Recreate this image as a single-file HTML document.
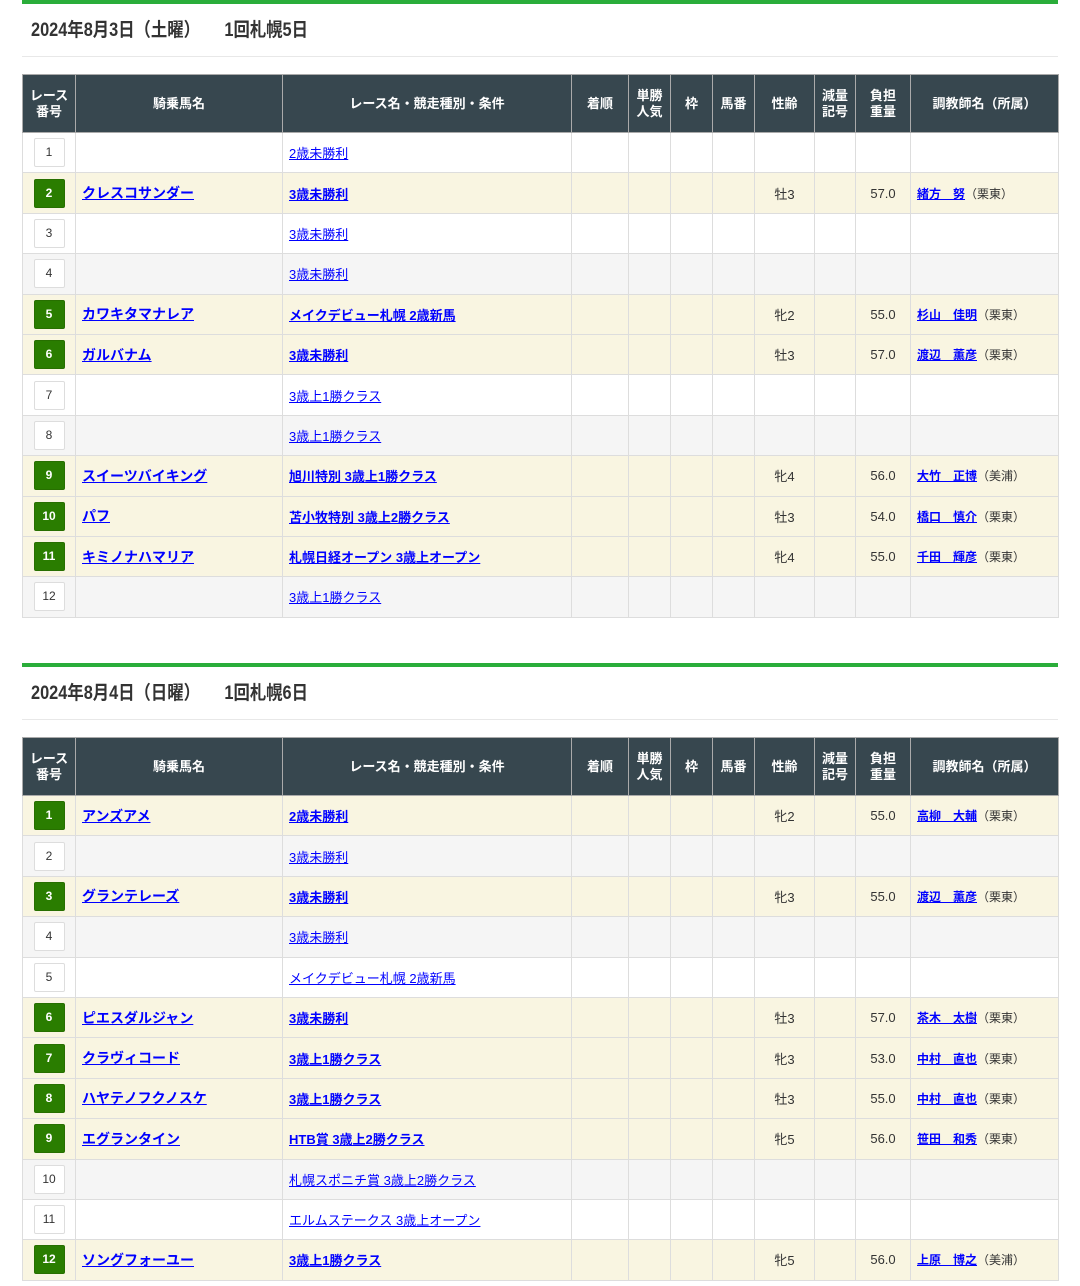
<!DOCTYPE html>
<html><head><meta charset="utf-8"><style>
body{margin:0;background:#fff;font-family:"Liberation Sans","Noto Sans CJK JP",sans-serif;}
.sec{position:absolute;left:22px;width:1036px;}
.bar{height:4px;background:#2aad3a;}
.ttl{height:52px;border-bottom:1px solid #e8e8e8;font-size:19px;color:#333;line-height:54px;padding-left:9px;}
.ttl span{display:inline-block;font-weight:bold;transform:scaleX(0.86);transform-origin:left;white-space:nowrap;}
table{border-collapse:collapse;width:1036px;table-layout:fixed;margin-top:17px;font-size:13px;}
th{background:#37474f;color:#fff;font-weight:bold;font-size:13px;line-height:16px;height:57px;border:1px solid #aaa;padding:0;}
td{border:1px solid #ddd;height:39.4px;padding:0;text-align:center;color:#333;}
td:nth-child(2),td:nth-child(3){text-align:left;padding-left:6px;}
td:nth-child(2) a{font-size:14px;}
td.t{text-align:left;padding-left:6px;font-size:12px;}
tr.c td{background:#f9f5e1;}
tr.s td{background:#f5f5f5;}
tr.w td{background:#fff;}
a{color:#00f;text-decoration:underline;}
a.b{font-weight:bold;}
.n{display:inline-block;width:29px;height:27px;line-height:27px;border:1px solid #ddd;border-radius:2px;background:#fff;font-size:12px;color:#333;}
.n.g{background:#2a7d00;color:#fff;border-color:#276f00;font-weight:bold;}
</style></head><body>

<div class="sec" style="top:0">
<div class="bar"></div>
<div class="ttl"><span>2024年8月3日（土曜）　　1回札幌5日</span></div>
<table>
<colgroup><col style="width:53px"><col style="width:207px"><col style="width:289px"><col style="width:57px"><col style="width:42px"><col style="width:42px"><col style="width:42px"><col style="width:60px"><col style="width:41px"><col style="width:55px"><col style="width:148px"></colgroup>
<tr><th>レース<br>番号</th><th>騎乗馬名</th><th>レース名・競走種別・条件</th><th>着順</th><th>単勝<br>人気</th><th>枠</th><th>馬番</th><th>性齢</th><th>減量<br>記号</th><th>負担<br>重量</th><th>調教師名（所属）</th></tr>
<tr class="w"><td><span class="n">1</span></td><td></td><td><a>2歳未勝利</a></td><td></td><td></td><td></td><td></td><td></td><td></td><td></td><td></td></tr>
<tr class="c"><td><span class="n g">2</span></td><td><a class="b">クレスコサンダー</a></td><td><a class="b">3歳未勝利</a></td><td></td><td></td><td></td><td></td><td>牡3</td><td></td><td>57.0</td><td class="t"><a class="b">緒方　努</a>（栗東）</td></tr>
<tr class="w"><td><span class="n">3</span></td><td></td><td><a>3歳未勝利</a></td><td></td><td></td><td></td><td></td><td></td><td></td><td></td><td></td></tr>
<tr class="s"><td><span class="n">4</span></td><td></td><td><a>3歳未勝利</a></td><td></td><td></td><td></td><td></td><td></td><td></td><td></td><td></td></tr>
<tr class="c"><td><span class="n g">5</span></td><td><a class="b">カワキタマナレア</a></td><td><a class="b">メイクデビュー札幌 2歳新馬</a></td><td></td><td></td><td></td><td></td><td>牝2</td><td></td><td>55.0</td><td class="t"><a class="b">杉山　佳明</a>（栗東）</td></tr>
<tr class="c"><td><span class="n g">6</span></td><td><a class="b">ガルバナム</a></td><td><a class="b">3歳未勝利</a></td><td></td><td></td><td></td><td></td><td>牡3</td><td></td><td>57.0</td><td class="t"><a class="b">渡辺　薫彦</a>（栗東）</td></tr>
<tr class="w"><td><span class="n">7</span></td><td></td><td><a>3歳上1勝クラス</a></td><td></td><td></td><td></td><td></td><td></td><td></td><td></td><td></td></tr>
<tr class="s"><td><span class="n">8</span></td><td></td><td><a>3歳上1勝クラス</a></td><td></td><td></td><td></td><td></td><td></td><td></td><td></td><td></td></tr>
<tr class="c"><td><span class="n g">9</span></td><td><a class="b">スイーツバイキング</a></td><td><a class="b">旭川特別 3歳上1勝クラス</a></td><td></td><td></td><td></td><td></td><td>牝4</td><td></td><td>56.0</td><td class="t"><a class="b">大竹　正博</a>（美浦）</td></tr>
<tr class="c"><td><span class="n g">10</span></td><td><a class="b">パフ</a></td><td><a class="b">苫小牧特別 3歳上2勝クラス</a></td><td></td><td></td><td></td><td></td><td>牡3</td><td></td><td>54.0</td><td class="t"><a class="b">橋口　慎介</a>（栗東）</td></tr>
<tr class="c"><td><span class="n g">11</span></td><td><a class="b">キミノナハマリア</a></td><td><a class="b">札幌日経オープン 3歳上オープン</a></td><td></td><td></td><td></td><td></td><td>牝4</td><td></td><td>55.0</td><td class="t"><a class="b">千田　輝彦</a>（栗東）</td></tr>
<tr class="s"><td><span class="n">12</span></td><td></td><td><a>3歳上1勝クラス</a></td><td></td><td></td><td></td><td></td><td></td><td></td><td></td><td></td></tr>
</table>
</div>

<div class="sec" style="top:663px">
<div class="bar"></div>
<div class="ttl"><span>2024年8月4日（日曜）　　1回札幌6日</span></div>
<table>
<colgroup><col style="width:53px"><col style="width:207px"><col style="width:289px"><col style="width:57px"><col style="width:42px"><col style="width:42px"><col style="width:42px"><col style="width:60px"><col style="width:41px"><col style="width:55px"><col style="width:148px"></colgroup>
<tr><th>レース<br>番号</th><th>騎乗馬名</th><th>レース名・競走種別・条件</th><th>着順</th><th>単勝<br>人気</th><th>枠</th><th>馬番</th><th>性齢</th><th>減量<br>記号</th><th>負担<br>重量</th><th>調教師名（所属）</th></tr>
<tr class="c"><td><span class="n g">1</span></td><td><a class="b">アンズアメ</a></td><td><a class="b">2歳未勝利</a></td><td></td><td></td><td></td><td></td><td>牝2</td><td></td><td>55.0</td><td class="t"><a class="b">高柳　大輔</a>（栗東）</td></tr>
<tr class="s"><td><span class="n">2</span></td><td></td><td><a>3歳未勝利</a></td><td></td><td></td><td></td><td></td><td></td><td></td><td></td><td></td></tr>
<tr class="c"><td><span class="n g">3</span></td><td><a class="b">グランテレーズ</a></td><td><a class="b">3歳未勝利</a></td><td></td><td></td><td></td><td></td><td>牝3</td><td></td><td>55.0</td><td class="t"><a class="b">渡辺　薫彦</a>（栗東）</td></tr>
<tr class="s"><td><span class="n">4</span></td><td></td><td><a>3歳未勝利</a></td><td></td><td></td><td></td><td></td><td></td><td></td><td></td><td></td></tr>
<tr class="w"><td><span class="n">5</span></td><td></td><td><a>メイクデビュー札幌 2歳新馬</a></td><td></td><td></td><td></td><td></td><td></td><td></td><td></td><td></td></tr>
<tr class="c"><td><span class="n g">6</span></td><td><a class="b">ピエスダルジャン</a></td><td><a class="b">3歳未勝利</a></td><td></td><td></td><td></td><td></td><td>牡3</td><td></td><td>57.0</td><td class="t"><a class="b">茶木　太樹</a>（栗東）</td></tr>
<tr class="c"><td><span class="n g">7</span></td><td><a class="b">クラヴィコード</a></td><td><a class="b">3歳上1勝クラス</a></td><td></td><td></td><td></td><td></td><td>牝3</td><td></td><td>53.0</td><td class="t"><a class="b">中村　直也</a>（栗東）</td></tr>
<tr class="c"><td><span class="n g">8</span></td><td><a class="b">ハヤテノフクノスケ</a></td><td><a class="b">3歳上1勝クラス</a></td><td></td><td></td><td></td><td></td><td>牡3</td><td></td><td>55.0</td><td class="t"><a class="b">中村　直也</a>（栗東）</td></tr>
<tr class="c"><td><span class="n g">9</span></td><td><a class="b">エグランタイン</a></td><td><a class="b">HTB賞 3歳上2勝クラス</a></td><td></td><td></td><td></td><td></td><td>牝5</td><td></td><td>56.0</td><td class="t"><a class="b">笹田　和秀</a>（栗東）</td></tr>
<tr class="s"><td><span class="n">10</span></td><td></td><td><a>札幌スポニチ賞 3歳上2勝クラス</a></td><td></td><td></td><td></td><td></td><td></td><td></td><td></td><td></td></tr>
<tr class="w"><td><span class="n">11</span></td><td></td><td><a>エルムステークス 3歳上オープン</a></td><td></td><td></td><td></td><td></td><td></td><td></td><td></td><td></td></tr>
<tr class="c"><td><span class="n g">12</span></td><td><a class="b">ソングフォーユー</a></td><td><a class="b">3歳上1勝クラス</a></td><td></td><td></td><td></td><td></td><td>牝5</td><td></td><td>56.0</td><td class="t"><a class="b">上原　博之</a>（美浦）</td></tr>
</table>
</div>
</body></html>
